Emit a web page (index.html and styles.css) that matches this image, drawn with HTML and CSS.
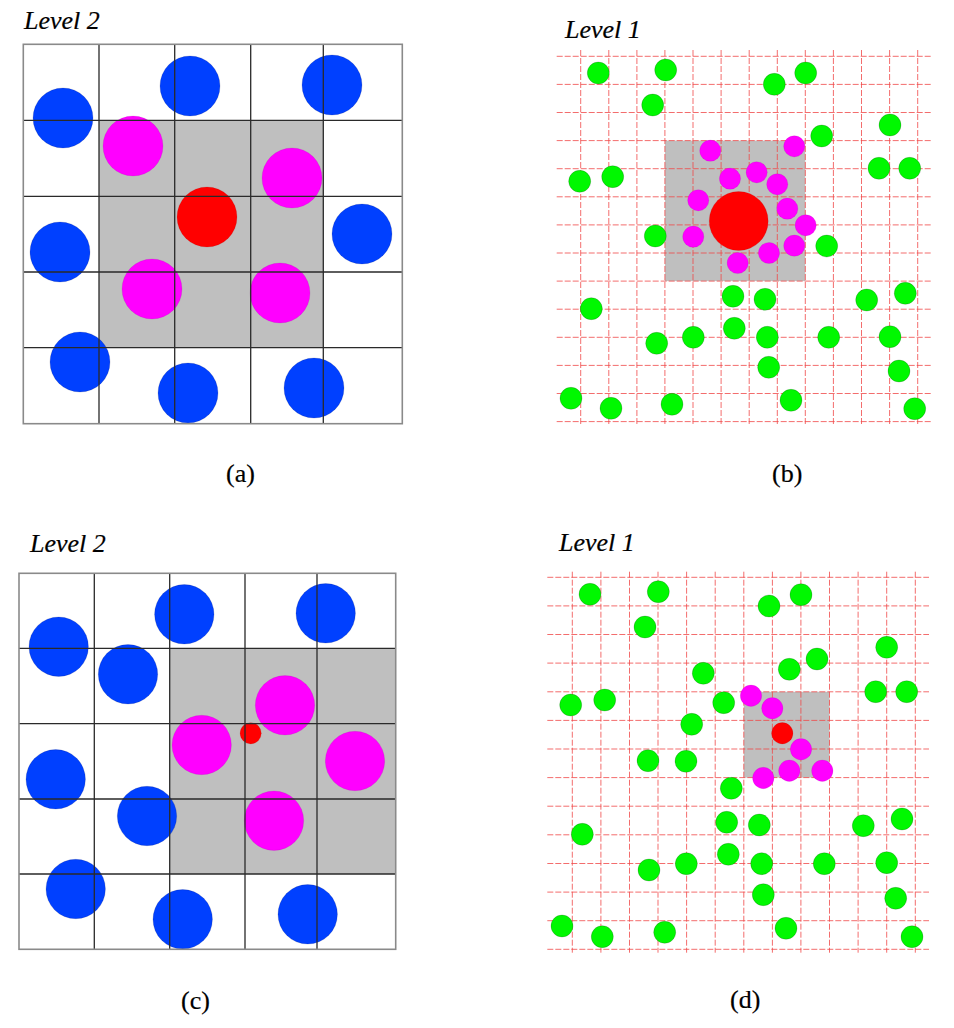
FILE: index.html
```html
<!DOCTYPE html>
<html lang="en">
<head>
<meta charset="utf-8">
<title>Level 2 / Level 1 neighbourhood search</title>
<link rel="stylesheet" href="styles.css">
</head>
<body>
<div class="figure">

  <div class="panel panel-a">
    <div class="label">Level 2</div>
    <svg class="plot" viewBox="0 36 477 420" xmlns="http://www.w3.org/2000/svg">
      <rect class="region" x="99" y="120.3" width="224.3" height="227.4"/>
      <circle class="blue" cx="63" cy="118" r="30"/>
      <circle class="blue" cx="190" cy="86" r="30"/>
      <circle class="blue" cx="332" cy="85" r="30"/>
      <circle class="blue" cx="60" cy="252" r="30"/>
      <circle class="blue" cx="362" cy="234" r="30"/>
      <circle class="blue" cx="80" cy="362" r="30"/>
      <circle class="blue" cx="188" cy="393" r="30"/>
      <circle class="blue" cx="314" cy="388" r="30"/>
      <circle class="magenta" cx="133" cy="146" r="30"/>
      <circle class="magenta" cx="292" cy="178" r="30"/>
      <circle class="magenta" cx="152" cy="289" r="30"/>
      <circle class="magenta" cx="280" cy="293" r="30"/>
      <circle class="red" cx="207" cy="217" r="30"/>
      <path class="grid-inner" d="M99 44.3V423.7M174.7 44.3V423.7M250.7 44.3V423.7M323.3 44.3V423.7M23.3 120.3H402.3M23.3 196.3H402.3M23.3 272H402.3M23.3 347.7H402.3"/>
      <rect class="grid-outer" x="23.3" y="44.3" width="379" height="379.4"/>
    </svg>
    <div class="caption">(a)</div>
  </div>

  <div class="panel panel-b">
    <div class="label">Level 1</div>
    <svg class="plot" viewBox="477 45 477 411" xmlns="http://www.w3.org/2000/svg">
      <rect class="region" x="664.9" y="140.6" width="140.4" height="140.5"/>
      <path class="grid-dash" d="M580.7 50V425M608.8 50V425M636.9 50V425M664.9 50V425M693 50V425M721.1 50V425M749.2 50V425M777.3 50V425M805.3 50V425M833.4 50V425M861.5 50V425M889.6 50V425M917.7 50V425"/>
      <path class="grid-dash" d="M556.7 56.3H931.7M556.7 84.4H931.7M556.7 112.5H931.7M556.7 140.6H931.7M556.7 168.7H931.7M556.7 196.8H931.7M556.7 224.9H931.7M556.7 253H931.7M556.7 281.1H931.7M556.7 309.2H931.7M556.7 337.3H931.7M556.7 365.4H931.7M556.7 393.5H931.7M556.7 421.6H931.7"/>
      <circle class="green" cx="598.3" cy="73" r="11"/>
      <circle class="green" cx="665.7" cy="70" r="11"/>
      <circle class="green" cx="774.3" cy="84.3" r="11"/>
      <circle class="green" cx="805.7" cy="73" r="11"/>
      <circle class="green" cx="652.7" cy="105" r="11"/>
      <circle class="green" cx="890" cy="125" r="11"/>
      <circle class="green" cx="821.7" cy="136" r="11"/>
      <circle class="green" cx="879" cy="168.3" r="11"/>
      <circle class="green" cx="909.7" cy="168.3" r="11"/>
      <circle class="green" cx="579.7" cy="181.3" r="11"/>
      <circle class="green" cx="612.7" cy="176.7" r="11"/>
      <circle class="green" cx="655.3" cy="236" r="11"/>
      <circle class="green" cx="826.7" cy="246" r="11"/>
      <circle class="green" cx="733" cy="296.3" r="11"/>
      <circle class="green" cx="765" cy="299.3" r="11"/>
      <circle class="green" cx="866.7" cy="300" r="11"/>
      <circle class="green" cx="905.3" cy="293.3" r="11"/>
      <circle class="green" cx="591.3" cy="308.7" r="11"/>
      <circle class="green" cx="734.3" cy="328.3" r="11"/>
      <circle class="green" cx="767.3" cy="337.3" r="11"/>
      <circle class="green" cx="828.7" cy="337.3" r="11"/>
      <circle class="green" cx="890" cy="336.7" r="11"/>
      <circle class="green" cx="656.7" cy="343.3" r="11"/>
      <circle class="green" cx="693.3" cy="337.3" r="11"/>
      <circle class="green" cx="768.7" cy="367.3" r="11"/>
      <circle class="green" cx="899" cy="371" r="11"/>
      <circle class="green" cx="571" cy="398.3" r="11"/>
      <circle class="green" cx="611" cy="408.3" r="11"/>
      <circle class="green" cx="672" cy="404.3" r="11"/>
      <circle class="green" cx="791" cy="400.3" r="11"/>
      <circle class="green" cx="914.7" cy="408.7" r="11"/>
      <circle class="magenta" cx="710.3" cy="150.7" r="10.6"/>
      <circle class="magenta" cx="794.3" cy="146.3" r="10.6"/>
      <circle class="magenta" cx="730" cy="178.7" r="10.6"/>
      <circle class="magenta" cx="756.7" cy="172.3" r="10.6"/>
      <circle class="magenta" cx="777.3" cy="184.3" r="10.6"/>
      <circle class="magenta" cx="698.3" cy="200.3" r="10.6"/>
      <circle class="magenta" cx="787.3" cy="208.7" r="10.6"/>
      <circle class="magenta" cx="805.7" cy="225.3" r="10.6"/>
      <circle class="magenta" cx="693.3" cy="236.7" r="10.6"/>
      <circle class="magenta" cx="794.3" cy="245.7" r="10.6"/>
      <circle class="magenta" cx="769" cy="253" r="10.6"/>
      <circle class="magenta" cx="737.7" cy="263" r="10.6"/>
      <circle class="red" cx="738.7" cy="221" r="29.5"/>
    </svg>
    <div class="caption">(b)</div>
  </div>

  <div class="panel panel-c">
    <div class="label">Level 2</div>
    <svg class="plot" viewBox="0 559 477 424" xmlns="http://www.w3.org/2000/svg">
      <rect class="region" x="169.7" y="648.3" width="226" height="225.7"/>
      <circle class="blue" cx="58.7" cy="646.7" r="29.7"/>
      <circle class="blue" cx="184.3" cy="614.3" r="29.7"/>
      <circle class="blue" cx="325.7" cy="613.3" r="29.7"/>
      <circle class="blue" cx="128" cy="674.3" r="29.7"/>
      <circle class="blue" cx="55.7" cy="779.3" r="29.7"/>
      <circle class="blue" cx="147" cy="816" r="29.7"/>
      <circle class="blue" cx="75.7" cy="889" r="29.7"/>
      <circle class="blue" cx="182.7" cy="919.3" r="29.7"/>
      <circle class="blue" cx="307.7" cy="914.3" r="29.7"/>
      <circle class="magenta" cx="285" cy="705.3" r="29.7"/>
      <circle class="magenta" cx="201.7" cy="745" r="29.7"/>
      <circle class="magenta" cx="355" cy="761" r="29.7"/>
      <circle class="magenta" cx="274" cy="820.7" r="29.7"/>
      <circle class="red" cx="250.7" cy="733.3" r="10.6"/>
      <path class="grid-inner" d="M94.3 573.3V949.3M169.7 573.3V949.3M245 573.3V949.3M317 573.3V949.3M19 648.3H395.7M19 723.7H395.7M19 799H395.7M19 874H395.7"/>
      <rect class="grid-outer" x="19" y="573.3" width="376.7" height="376"/>
    </svg>
    <div class="caption">(c)</div>
  </div>

  <div class="panel panel-d">
    <div class="label">Level 1</div>
    <svg class="plot" viewBox="477 558 477 424" xmlns="http://www.w3.org/2000/svg">
      <rect class="region" x="743.8" y="691.8" width="85.7" height="85.8"/>
      <path class="grid-dash" d="M572.3 571.7V952.7M600.9 571.7V952.7M629.5 571.7V952.7M658 571.7V952.7M686.6 571.7V952.7M715.2 571.7V952.7M743.8 571.7V952.7M772.4 571.7V952.7M800.9 571.7V952.7M829.5 571.7V952.7M858.1 571.7V952.7M886.7 571.7V952.7M915.3 571.7V952.7"/>
      <path class="grid-dash" d="M547.3 577.3H929M547.3 605.9H929M547.3 634.5H929M547.3 663.1H929M547.3 691.8H929M547.3 720.4H929M547.3 749H929M547.3 777.6H929M547.3 806.2H929M547.3 834.8H929M547.3 863.5H929M547.3 892.1H929M547.3 920.7H929M547.3 949.3H929"/>
      <circle class="green" cx="590" cy="594.3" r="11"/>
      <circle class="green" cx="658.3" cy="591.7" r="11"/>
      <circle class="green" cx="769" cy="606" r="11"/>
      <circle class="green" cx="801" cy="594.7" r="11"/>
      <circle class="green" cx="645" cy="627" r="11"/>
      <circle class="green" cx="886.7" cy="647.3" r="11"/>
      <circle class="green" cx="817" cy="659" r="11"/>
      <circle class="green" cx="789.3" cy="669.3" r="11"/>
      <circle class="green" cx="703.3" cy="673.3" r="11"/>
      <circle class="green" cx="875.7" cy="691.7" r="11"/>
      <circle class="green" cx="906.7" cy="691.7" r="11"/>
      <circle class="green" cx="570.7" cy="705" r="11"/>
      <circle class="green" cx="604.7" cy="700" r="11"/>
      <circle class="green" cx="723.7" cy="702.7" r="11"/>
      <circle class="green" cx="691.7" cy="724.3" r="11"/>
      <circle class="green" cx="648" cy="760.7" r="11"/>
      <circle class="green" cx="686" cy="761.3" r="11"/>
      <circle class="green" cx="731.3" cy="788.3" r="11"/>
      <circle class="green" cx="726.7" cy="822.3" r="11"/>
      <circle class="green" cx="759.3" cy="825" r="11"/>
      <circle class="green" cx="582.3" cy="834.3" r="11"/>
      <circle class="green" cx="863.3" cy="825.7" r="11"/>
      <circle class="green" cx="902" cy="819" r="11"/>
      <circle class="green" cx="728.3" cy="854.3" r="11"/>
      <circle class="green" cx="761.7" cy="863.7" r="11"/>
      <circle class="green" cx="686.3" cy="863.7" r="11"/>
      <circle class="green" cx="649" cy="870" r="11"/>
      <circle class="green" cx="824.3" cy="863.7" r="11"/>
      <circle class="green" cx="886.7" cy="862.7" r="11"/>
      <circle class="green" cx="763.3" cy="894.7" r="11"/>
      <circle class="green" cx="895.7" cy="898.3" r="11"/>
      <circle class="green" cx="562" cy="926" r="11"/>
      <circle class="green" cx="602.3" cy="936.7" r="11"/>
      <circle class="green" cx="664.7" cy="932.3" r="11"/>
      <circle class="green" cx="786" cy="928.3" r="11"/>
      <circle class="green" cx="912" cy="936.7" r="11"/>
      <circle class="magenta" cx="751" cy="695.7" r="10.7"/>
      <circle class="magenta" cx="772.3" cy="708.3" r="10.7"/>
      <circle class="magenta" cx="801" cy="749.3" r="10.7"/>
      <circle class="magenta" cx="789.3" cy="770.7" r="10.7"/>
      <circle class="magenta" cx="822.3" cy="770.7" r="10.7"/>
      <circle class="magenta" cx="763.3" cy="778" r="10.7"/>
      <circle class="red" cx="782.3" cy="733.3" r="10.7"/>
    </svg>
    <div class="caption">(d)</div>
  </div>

</div>
</body>
</html>
```
FILE: styles.css
```css
body {
  margin: 0;
  background: #ffffff;
  color: #000000;
  font-family: "Liberation Serif", "Times New Roman", serif;
}

.figure {
  display: grid;
  grid-template-columns: 477px 477px;
  grid-template-rows: 520px 508px;
  width: 954px;
}

.panel {
  display: flex;
  flex-direction: column;
}

.label {
  font-style: italic;
  font-size: 26px;
  line-height: 30px;
  -webkit-text-stroke: 0.2px #000;
}

.plot {
  display: block;
  width: 477px;
  overflow: visible;
}

.caption {
  font-size: 26px;
  line-height: 30px;
  margin-top: 3px;
  -webkit-text-stroke: 0.2px #000;
}

/* panel offsets */
.panel-a .label { margin-top: 6px; padding-left: 24px; }
.panel-a .plot { height: 420px; }
.panel-a .caption { padding-left: 226px; }

.panel-b .label { margin-top: 15px; padding-left: 88px; }
.panel-b .plot { height: 411px; }
.panel-b .caption { padding-left: 295px; }

.panel-c .label { margin-top: 9px; padding-left: 30px; }
.panel-c .plot { height: 424px; }
.panel-c .caption { padding-left: 181px; }

.panel-d .label { margin-top: 8px; padding-left: 82px; }
.panel-d .plot { height: 424px; }
.panel-d .caption { padding-left: 253px; }

/* drawing */
.region { fill: #bfbfbf; }

.blue { fill: #0040ff; stroke: rgba(0, 0, 60, 0.15); stroke-width: 1; }
.magenta { fill: #ff00ff; stroke: rgba(120, 0, 120, 0.12); stroke-width: 1; }
.red { fill: #ff0000; stroke: rgba(120, 0, 0, 0.12); stroke-width: 1; }
.green { fill: #00f800; stroke: rgba(0, 0, 0, 0.18); stroke-width: 1; }

.grid-inner {
  fill: none;
  stroke: #2a2a2a;
  stroke-width: 1.3;
}

.grid-outer {
  fill: none;
  stroke: #8a8a8a;
  stroke-width: 1.6;
}

.grid-dash {
  fill: none;
  stroke: #f04848;
  stroke-opacity: 0.8;
  stroke-width: 1;
  stroke-dasharray: 6 2;
}
```
